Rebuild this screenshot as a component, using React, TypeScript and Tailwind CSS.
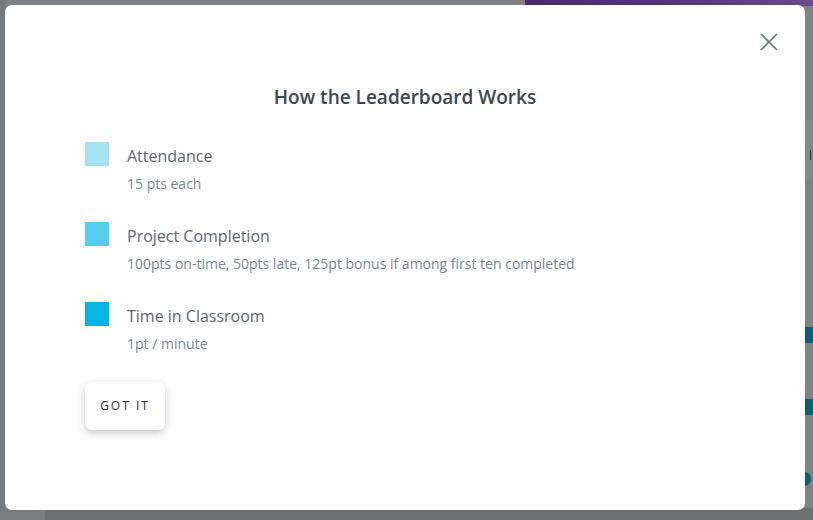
import { X } from 'lucide-react'

const items = [
  { color: 'bg-[#a4e3f3]', title: 'Attendance', detail: '15 pts each' },
  { color: 'bg-[#56cded]', title: 'Project Completion', detail: '100pts on-time, 50pts late, 125pt bonus if among first ten completed' },
  { color: 'bg-[#04b4e2]', title: 'Time in Classroom', detail: '1pt / minute' },
]

export default function App() {
  return (
    <div className="relative h-[520px] w-[813px] overflow-hidden bg-[#7e8284] font-['Open_Sans',sans-serif]">
      {/* page behind the overlay */}
      <div className="absolute right-0 top-0 h-[6px] w-[288px] bg-gradient-to-r from-[#4b2a6b] via-[#553576] to-[#6a4a8a]"></div>
      <div className="absolute left-0 top-0 h-full w-[5px] bg-[#76797b]"></div>
      <div className="absolute bottom-0 left-0 h-[12px] w-full bg-[#6e6f73]"></div>
      <div className="absolute bottom-0 left-0 h-[12px] w-[45px] bg-[#7a7d80]"></div>
      <div className="absolute right-0 top-[120px] h-[60px] w-[10px] bg-[#85888a]"></div>
      <div className="absolute right-[2px] top-[150px] h-[10px] w-[1px] bg-[#3a2c55]"></div>
      <div className="absolute right-0 top-[327px] h-[16px] w-[10px] bg-[#0d5c74]"></div>
      <div className="absolute right-0 top-[399px] h-[16px] w-[10px] bg-[#0d5c74]"></div>
      <div className="absolute right-[2px] top-[472px] h-[14px] w-[14px] rounded-full bg-[#0d5c74]"></div>

      <div className="relative ml-[5px] mt-[5px] h-[505px] w-[800px] rounded-[7px] bg-white">
        <button className="absolute right-[21px] top-[22px] text-[#6b7886]">
          <X className="h-[30px] w-[30px]" strokeWidth={1.4} />
        </button>

        <h2 className="pt-[79px] text-center text-[19px] font-semibold leading-[27px] text-[#3a4754]">
          How the Leaderboard Works
        </h2>

        <div className="mt-[31px] flex flex-col gap-[28px] pl-[80px]">
          {items.map((item) => (
            <div key={item.title} className="flex gap-[18px]">
              <div className={`h-[24px] w-[24px] shrink-0 ${item.color}`}></div>
              <div className="mt-[2px] flex flex-col gap-[5px]">
                <div className="text-[16px] leading-[24px] text-[#5c6673]">{item.title}</div>
                <div className="text-[14px] leading-[21px] text-[#7b8591]">{item.detail}</div>
              </div>
            </div>
          ))}

          <button className="h-[48px] w-[80px] rounded-[7px] bg-white text-[12px] font-medium tracking-[2px] text-[#2b2b2b] shadow-[0_3px_8px_rgba(0,0,0,0.22)]">
            GOT IT
          </button>
        </div>
      </div>
    </div>
  )
}
